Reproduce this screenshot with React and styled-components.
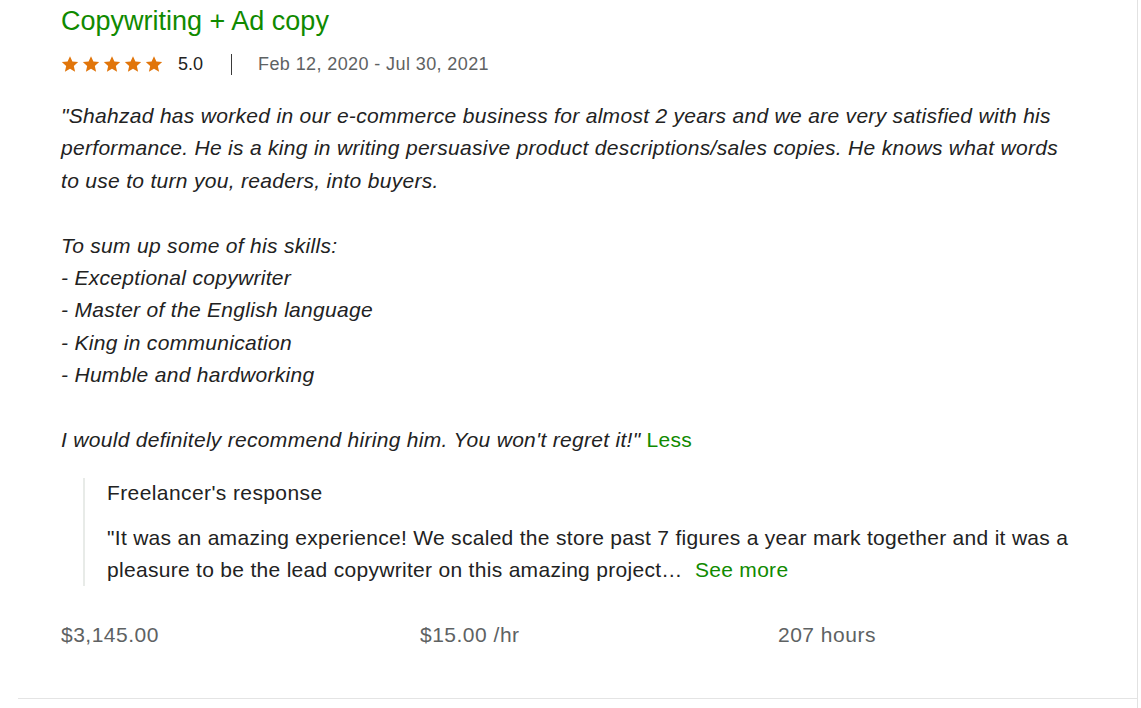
import styled, { createGlobalStyle } from "styled-components";

const Global = createGlobalStyle`
  body {
    margin: 0;
    background: #fff;
    font-family: "Liberation Sans", Arial, Helvetica, sans-serif;
    color: #222;
  }
`;

const Page = styled.div`
  width: 1119px;
  height: 708px;
  padding-left: 18px;
  border-right: 1px solid #e2e2e2;
`;

const Card = styled.div`
  padding: 6px 0 0 43px;
  height: 692px;
  border-bottom: 1px solid #e4e4e4;
`;

const Title = styled.h2`
  margin: 0;
  font-size: 27px;
  line-height: 30px;
  font-weight: 400;
  color: #108a00;
`;

const Meta = styled.div`
  display: flex;
  align-items: center;
  height: 22px;
  margin-top: 17px;
`;

const Stars = styled.div`
  display: flex;
  gap: 3px;
`;

const Score = styled.span`
  font-size: 18px;
  margin-left: 15px;
  color: #222;
`;

const Divider = styled.span`
  width: 1px;
  height: 21px;
  background: #3a3a3a;
  margin: 0 26px 0 28px;
`;

const Dates = styled.span`
  font-size: 18px;
  letter-spacing: 0.4px;
  color: #5e6263;
`;

const Quote = styled.p`
  margin: 25px 0 0;
  max-width: 1015px;
  font-size: 21px;
  letter-spacing: 0.3px;
  line-height: 32.4px;
  font-style: italic;
  color: #222;
  white-space: pre-line;
`;

const Link = styled.a`
  color: #108a00;
  font-style: normal;
  text-decoration: none;
  cursor: pointer;
`;

const Response = styled.div`
  margin: 22px 0 0 22px;
  padding-left: 22px;
  border-left: 2px solid #e8ebe8;
`;

const ResponseHead = styled.h4`
  margin: 0;
  font-size: 21px;
  letter-spacing: 0.4px;
  line-height: 30px;
  font-weight: 400;
  color: #222;
`;

const ResponseText = styled.p`
  margin: 14px 0 0;
  font-size: 21px;
  letter-spacing: 0.3px;
  line-height: 32px;
  color: #222;
`;

const Stats = styled.div`
  display: grid;
  grid-template-columns: 359px 358px 1fr;
  margin-top: 37px;
`;

const Stat = styled.span`
  font-size: 21px;
  letter-spacing: 0.5px;
  line-height: 24px;
  color: #5e6263;
`;

const Star = () => (
  <svg width="18" height="18" viewBox="0 0 24 24">
    <path
      fill="#e1750a"
      d="M12 1.5l3.2 7.1 7.7.8-5.8 5.2 1.7 7.6L12 18.3l-6.8 3.9 1.7-7.6-5.8-5.2 7.7-.8z"
    />
  </svg>
);

const quote = `"Shahzad has worked in our e-commerce business for almost 2 years and we are very satisfied with his performance. He is a king in writing persuasive product descriptions/sales copies. He knows what words to use to turn you, readers, into buyers.

To sum up some of his skills:
- Exceptional copywriter
- Master of the English language
- King in communication
- Humble and hardworking

I would definitely recommend hiring him. You won't regret it!" `;

export default function App() {
  return (
    <>
      <Global />
      <Page>
        <Card>
          <Title>Copywriting + Ad copy</Title>
          <Meta>
            <Stars>
              {[0, 1, 2, 3, 4].map((i) => (
                <Star key={i} />
              ))}
            </Stars>
            <Score>5.0</Score>
            <Divider />
            <Dates>Feb 12, 2020 - Jul 30, 2021</Dates>
          </Meta>
          <Quote>
            {quote}
            <Link>Less</Link>
          </Quote>
          <Response>
            <ResponseHead>Freelancer's response</ResponseHead>
            <ResponseText>
              "It was an amazing experience! We scaled the store past 7 figures a year mark together and it was a
              pleasure to be the lead copywriter on this amazing project…&nbsp; <Link>See more</Link>
            </ResponseText>
          </Response>
          <Stats>
            <Stat>$3,145.00</Stat>
            <Stat>$15.00 /hr</Stat>
            <Stat>207 hours</Stat>
          </Stats>
        </Card>
      </Page>
    </>
  );
}
